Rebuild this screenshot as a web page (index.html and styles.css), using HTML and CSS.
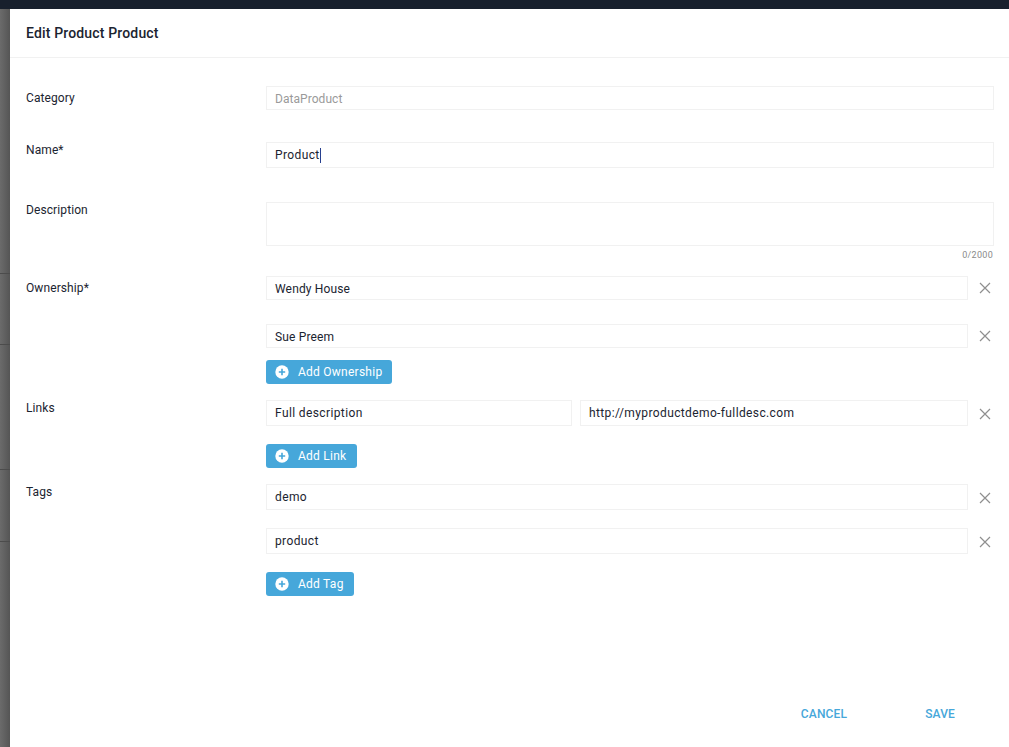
FILE: index.html
```html
<!DOCTYPE html>
<html lang="en">
<head>
<meta charset="utf-8">
<title>Edit Product Product</title>
<link rel="stylesheet" href="styles.css">
</head>
<body>
<div class="topbar"></div>
<div class="stage">
  <div class="backdrop">
    <span class="line l1"></span><span class="line l2"></span><span class="line l3"></span><span class="line l4"></span>
  </div>
  <main class="modal">
    <header class="modal-head"><h1>Edit Product Product</h1></header>
    <form class="form">
      <div class="row r-category">
        <div class="label">Category</div>
        <div class="field"><div class="box h24 muted">DataProduct</div></div>
      </div>
      <div class="row r-name">
        <div class="label">Name*</div>
        <div class="field"><div class="box h26">Product<span class="caret"></span></div></div>
      </div>
      <div class="row r-desc">
        <div class="label">Description</div>
        <div class="field"><div class="box h44"></div><div class="counter">0/2000</div></div>
      </div>
      <div class="row r-owner">
        <div class="label">Ownership*</div>
        <div class="field">
          <div class="line-item gap24"><div class="box h24 grow">Wendy House</div><svg class="x" viewBox="0 0 12 12"><path d="M1 1L11 11M11 1L1 11"/></svg></div>
          <div class="line-item gap12"><div class="box h24 grow">Sue Preem</div><svg class="x" viewBox="0 0 12 12"><path d="M1 1L11 11M11 1L1 11"/></svg></div>
          <button type="button" class="add w126"><svg class="plus" viewBox="0 0 14 14"><circle cx="7" cy="7" r="6.7"/><path d="M7 3.8V10.2M3.8 7H10.2"/></svg>Add Ownership</button>
        </div>
      </div>
      <div class="row r-links">
        <div class="label">Links</div>
        <div class="field">
          <div class="line-item gap18"><div class="box h26 link-name">Full description</div><div class="box h26 grow">http://myproductdemo-fulldesc.com</div><svg class="x" viewBox="0 0 12 12"><path d="M1 1L11 11M11 1L1 11"/></svg></div>
          <button type="button" class="add w91"><svg class="plus" viewBox="0 0 14 14"><circle cx="7" cy="7" r="6.7"/><path d="M7 3.8V10.2M3.8 7H10.2"/></svg>Add Link</button>
        </div>
      </div>
      <div class="row r-tags">
        <div class="label">Tags</div>
        <div class="field">
          <div class="line-item gap18"><div class="box h26 grow">demo</div><svg class="x" viewBox="0 0 12 12"><path d="M1 1L11 11M11 1L1 11"/></svg></div>
          <div class="line-item gap18"><div class="box h26 grow">product</div><svg class="x" viewBox="0 0 12 12"><path d="M1 1L11 11M11 1L1 11"/></svg></div>
          <button type="button" class="add w88"><svg class="plus" viewBox="0 0 14 14"><circle cx="7" cy="7" r="6.7"/><path d="M7 3.8V10.2M3.8 7H10.2"/></svg>Add Tag</button>
        </div>
      </div>
    </form>
    <footer class="actions">
      <button type="button" class="text-btn">CANCEL</button>
      <button type="button" class="text-btn">SAVE</button>
    </footer>
  </main>
</div>
</body>
</html>
```
FILE: styles.css
```css
* { box-sizing: border-box; }
html, body { margin: 0; height: 100%; overflow: hidden; }
body {
  width: 1009px;
  height: 747px;
  font-family: Roboto, "Liberation Sans", sans-serif;
  font-size: 12px;
  color: #1b2430;
  background: #666;
  display: flex;
  flex-direction: column;
}
.topbar { height: 9px; background: #18202d; flex: none; }
.stage { flex: 1; display: flex; min-height: 0; }
.backdrop {
  width: 10px;
  flex: none;
  position: relative;
  background: linear-gradient(to right, #6b6b6b, #555);
}
.line { position: absolute; left: 0; right: 0; height: 1px; background: #4c4c4c; }
.l1 { top: 264px; }
.l2 { top: 335px; }
.l3 { top: 460px; }
.l4 { top: 532px; }
.modal { flex: 1; background: #fff; display: flex; flex-direction: column; }
.modal-head {
  height: 49px;
  flex: none;
  border-bottom: 1px solid #f1f1f1;
  padding: 16px 16px 0;
}
h1 { margin: 0; font-size: 14px; line-height: 16px; font-weight: 500; letter-spacing: 0.16px; color: #1b2430; }
.form { flex: 1; padding: 28px 15px 0 16px; display: flex; flex-direction: column; }
.row { display: flex; }
.label { width: 240px; flex: none; line-height: 14px; font-size: 12px; letter-spacing: 0.1px; padding-top: 5px; }
.field { flex: 1; min-width: 0; display: flex; flex-direction: column; align-items: stretch; }
.r-category { height: 56px; }
.r-name { height: 60px; }
.r-name .label { padding-top: 1px; }
.r-desc { height: 74px; }
.r-desc .label { padding-top: 1px; }
.r-owner { height: 124px; }
.r-owner .label { padding-top: 5px; }
.r-links { height: 84px; }
.r-links .label { padding-top: 1px; }
.r-tags .label { padding-top: 1px; }
.box {
  border: 1px solid #f1f1f1;
  padding: 0 8px;
  display: flex;
  align-items: center;
  font-size: 12px;
  letter-spacing: 0.38px;
  color: #1b2430;
}
.h24 { height: 24px; padding-top: 2px; letter-spacing: 0.15px; }
.h26 { height: 26px; }
.h44 { height: 44px; }
.muted { color: #9a9a9a; letter-spacing: 0.05px; }
.caret { width: 1px; height: 15px; background: #27408f; margin-left: 0; }
.counter { font-size: 9px; line-height: 12px; letter-spacing: 0.3px; color: #8a8a8a; text-align: right; padding: 3px 1px 0 0; }
.line-item { display: flex; align-items: center; gap: 8px; }
.gap24 { margin-bottom: 24px; }
.gap12 { margin-bottom: 12px; }
.gap18 { margin-bottom: 18px; }
.grow { flex: 1; min-width: 0; }
.link-name { width: 306px; flex: none; }
.x { width: 12px; height: 12px; flex: none; margin: 0 3px 0 3px; fill: none; stroke: #8f8f8f; stroke-width: 1.2; }
.h26 ~ .x { margin-top: 2px; }
.add {
  height: 24px;
  padding: 0 0 0 9px;
  border: 0;
  border-radius: 3px;
  background: #46a7da;
  color: #fff;
  font: 400 12px Roboto, "Liberation Sans", sans-serif;
  letter-spacing: 0.25px;
  display: flex;
  align-items: center;
  gap: 9px;
  align-self: flex-start;
}
.w126 { width: 126px; }
.w91 { width: 91px; }
.w88 { width: 88px; }
.plus { width: 14px; height: 14px; flex: none; }
.plus circle { fill: #fff; }
.plus path { stroke: #46a7da; stroke-width: 1.6; fill: none; }
.actions { flex: none; height: 41px; display: flex; justify-content: flex-end; padding: 0 54px 0 0; gap: 78px; }
.text-btn {
  border: 0;
  background: none;
  padding: 0;
  height: 16px;
  margin-top: 0;
  color: #46a7da;
  font: 500 12px/16px Roboto, "Liberation Sans", sans-serif;
  letter-spacing: 0.15px;
}
```
